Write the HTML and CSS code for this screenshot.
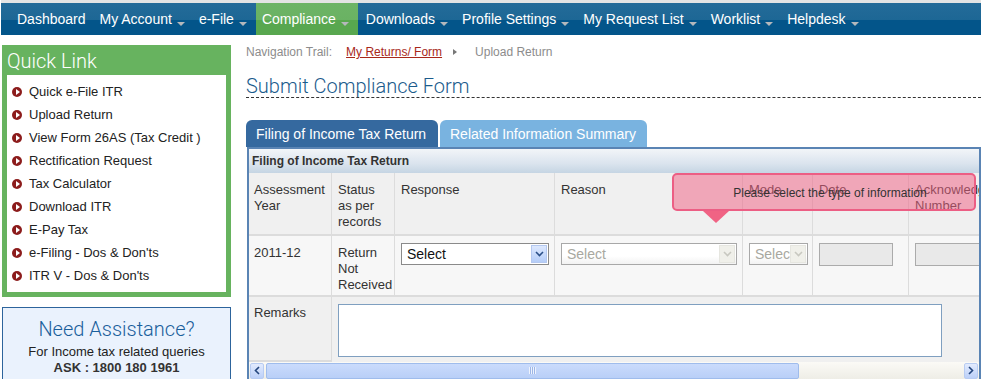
FILE: index.html
```html
<!DOCTYPE html>
<html lang="en">
<head>
    <meta charset="UTF-8">
    <meta name="viewport" content="width=device-width, initial-scale=1.0">
    <title>Submit Compliance Form</title>
    <link rel="stylesheet" href="styles.css">
</head>
<body>
    <div class="topnav">
        <a class="nav-item">Dashboard</a>
        <a class="nav-item">My Account<span class="caret"></span></a>
        <a class="nav-item">e-File<span class="caret"></span></a>
        <a class="nav-item active">Compliance<span class="caret"></span></a>
        <a class="nav-item">Downloads<span class="caret"></span></a>
        <a class="nav-item">Profile Settings<span class="caret"></span></a>
        <a class="nav-item">My Request List<span class="caret"></span></a>
        <a class="nav-item">Worklist<span class="caret"></span></a>
        <a class="nav-item">Helpdesk<span class="caret"></span></a>
    </div>

    <div class="page">
        <div class="sidebar">
            <div class="quick-link">
                <div class="ql-title">Quick Link</div>
                <ul class="ql-list">
                    <li><span class="bullet"></span>Quick e-File ITR</li>
                    <li><span class="bullet"></span>Upload Return</li>
                    <li><span class="bullet"></span>View Form 26AS (Tax Credit )</li>
                    <li><span class="bullet"></span>Rectification Request</li>
                    <li><span class="bullet"></span>Tax Calculator</li>
                    <li><span class="bullet"></span>Download ITR</li>
                    <li><span class="bullet"></span>E-Pay Tax</li>
                    <li><span class="bullet"></span>e-Filing - Dos &amp; Don'ts</li>
                    <li><span class="bullet"></span>ITR V - Dos &amp; Don'ts</li>
                </ul>
            </div>
            <div class="assist">
                <div class="assist-title">Need Assistance?</div>
                <div class="assist-text">For Income tax related queries</div>
                <div class="assist-phone">ASK : 1800 180 1961</div>
            </div>
        </div>

        <div class="main">
            <div class="trail">
                <span class="trail-label">Navigation Trail:</span>
                <a class="trail-link">My Returns/ Form</a>
                <span class="trail-arrow"></span>
                <span>Upload Return</span>
            </div>
            <h1 class="page-title">Submit Compliance Form</h1>

            <div class="tabs">
                <div class="tab active">Filing of Income Tax Return</div>
                <div class="tab">Related Information Summary</div>
            </div>

            <div class="panel">
                <div class="panel-head">Filing of Income Tax Return</div>
                <div class="scroll-area">
                    <div class="grid">
                        <div class="cell head">Assessment Year</div>
                        <div class="cell head">Status as per records</div>
                        <div class="cell head">Response</div>
                        <div class="cell head">Reason</div>
                        <div class="cell head">Mode</div>
                        <div class="cell head">Date</div>
                        <div class="cell head">Acknowledgement Number</div>

                        <div class="cell">2011-12</div>
                        <div class="cell">Return Not Received</div>
                        <div class="cell">
                            <div class="sel sel-response"><span>Select</span><span class="sel-btn"><svg width="9" height="6" viewBox="0 0 9 6"><path d="M1 1 L4.5 4.5 L8 1" fill="none" stroke="#2a4f88" stroke-width="1.6"/></svg></span></div>
                        </div>
                        <div class="cell">
                            <div class="sel sel-reason disabled"><span>Select</span><span class="sel-btn"><svg width="9" height="6" viewBox="0 0 9 6"><path d="M1 1 L4.5 4.5 L8 1" fill="none" stroke="#c8c8c0" stroke-width="1.6"/></svg></span></div>
                        </div>
                        <div class="cell">
                            <div class="sel sel-mode disabled"><span>Select</span><span class="sel-btn"><svg width="9" height="6" viewBox="0 0 9 6"><path d="M1 1 L4.5 4.5 L8 1" fill="none" stroke="#c8c8c0" stroke-width="1.6"/></svg></span></div>
                        </div>
                        <div class="cell"><div class="txt-box date-box"></div></div>
                        <div class="cell"><div class="txt-box ack-box"></div></div>

                        <div class="cell label">Remarks</div>
                        <div class="cell remarks"><div class="remarks-box"></div></div>
                    </div>
                </div>
                <div class="hscroll">
                    <span class="sb-btn"><svg width="6" height="9" viewBox="0 0 6 9"><path d="M5 1 L1.5 4.5 L5 8" fill="none" stroke="#24467e" stroke-width="1.6"/></svg></span>
                    <span class="sb-thumb"><span class="grip"></span></span>
                    <span class="sb-track"></span>
                    <span class="sb-btn"><svg width="6" height="9" viewBox="0 0 6 9"><path d="M1 1 L4.5 4.5 L1 8" fill="none" stroke="#24467e" stroke-width="1.6"/></svg></span>
                </div>

                <div class="tooltip">Please select the type of information</div>
            </div>
        </div>
    </div>
</body>
</html>
```

FILE: styles.css
```css
body {
    margin: 0;
    font-family: "Liberation Sans", Arial, sans-serif;
    background: #fff;
    color: #222;
    width: 990px;
    overflow: hidden;
}
.topnav {
    display: flex;
    margin: 0 9px 0 1px;
    padding-left: 9px;
    height: 32px;
    border-top: 3px solid #e4e4e4;
    background: linear-gradient(#246b99 0, #1d6795 52%, #03558a 52%, #03558a 100%);
}
.nav-item {
    display: flex;
    align-items: center;
    padding: 0 7px;
    color: #fff;
    font-size: 14px;
    white-space: nowrap;
}
.nav-item.active {
    background: linear-gradient(#6db466 0, #6ab263 52%, #58a74f 52%, #58a74f 100%);
    padding: 0 9px 0 6px;
    margin: 0 1px 0 2px;
}
.caret {
    display: inline-block;
    margin: 10px 0 0 5px;
    border-left: 4px solid transparent;
    border-right: 4px solid transparent;
    border-top: 4px solid #b4b8bc;
}
.page {
    display: flex;
}
.sidebar {
    width: 229px;
    margin: 10px 0 0 2px;
}
.quick-link {
    background: #67b35f;
    padding: 0 5px 5px;
}
.ql-title {
    height: 30px;
    line-height: 32px;
    color: #fff;
    font-family: Roboto, "Liberation Sans", sans-serif;
    font-weight: 300;
    font-size: 20px;
}
.ql-list {
    list-style: none;
    margin: 0;
    padding: 5px 0;
    background: #fff;
}
.ql-list li {
    height: 23px;
    line-height: 23px;
    font-size: 13px;
    color: #222;
    display: flex;
    align-items: center;
}
.bullet {
    position: relative;
    width: 10px;
    height: 10px;
    margin: 0 7px 0 5px;
    border-radius: 50%;
    background: #8c1c1c;
}
.bullet::after {
    content: "";
    position: absolute;
    left: 4px;
    top: 2px;
    border-top: 3px solid transparent;
    border-bottom: 3px solid transparent;
    border-left: 4px solid #fff;
}
.assist {
    margin-top: 10px;
    height: 80px;
    border: 1px solid #2d649c;
    background: #eaf2fd;
    text-align: center;
}
.assist-title {
    margin-top: 9px;
    font-family: Roboto, "Liberation Sans", sans-serif;
    font-weight: 300;
    font-size: 20px;
    color: #1a5f9c;
    line-height: 24px;
}
.assist-text {
    margin-top: 3px;
    font-size: 13px;
    line-height: 16px;
}
.assist-phone {
    font-size: 13px;
    font-weight: bold;
    color: #333;
    line-height: 16px;
}
.main {
    width: 735px;
    margin-left: 15px;
}
.trail {
    margin-top: 9px;
    height: 16px;
    line-height: 16px;
    font-size: 12px;
    color: #8c8c8c;
    display: flex;
    align-items: center;
}
.trail-link {
    margin-left: 14px;
    color: #a8281a;
    text-decoration: underline;
}
.trail-arrow {
    margin: 0 18px 0 11px;
    border-top: 3px solid transparent;
    border-bottom: 3px solid transparent;
    border-left: 4px solid #777;
}
.page-title {
    margin: 14px 0 0;
    height: 23px;
    line-height: 24px;
    font-family: Roboto, "Liberation Sans", sans-serif;
    font-weight: 300;
    font-size: 20px;
    color: #1b5b8c;
    border-bottom: 1px dashed #333;
}
.tabs {
    display: flex;
    gap: 2px;
    margin-top: 22px;
}
.tab {
    height: 27px;
    line-height: 28px;
    padding: 0 10px;
    border-radius: 6px 6px 0 0;
    background: #79b3e0;
    color: #fff;
    font-size: 14px;
    width: 187px;
}
.tab.active {
    background: #35699f;
    width: 172px;
}
.panel {
    position: relative;
    margin-left: 1px;
    border: 2px solid #5a84b4;
    border-bottom: none;
    height: 230px;
    background: #f0f0f0;
    overflow: hidden;
}
.panel-head {
    height: 24px;
    line-height: 24px;
    padding-left: 3px;
    font-size: 12px;
    font-weight: bold;
    color: #333;
    background: linear-gradient(#f2f5f8, #dbe4ee 60%, #c5d5e3);
}
.scroll-area {
    overflow: hidden;
}
.grid {
    display: grid;
    grid-template-columns: 84px 63px 160px 188px 70px 96px 130px;
    grid-template-rows: 63px 61px 65px;
    width: 791px;
    margin-left: -1px;
}
.cell {
    box-sizing: border-box;
    padding: 9px 6px 0;
    font-size: 13px;
    line-height: 16px;
    color: #333;
    border-right: 1px solid #dcdcdc;
    border-bottom: 2px solid #dcdcdc;
    background: #f7f7f7;
}
.cell.head {
    background: #f0f0f0;
}
.cell.label {
    background: #f0f0f0;
    padding-top: 8px;
}
.cell.remarks {
    grid-column: 2 / 8;
    background: #f0f0f0;
    padding-top: 7px;
    border-bottom: none;
}
.sel {
    display: flex;
    align-items: center;
    justify-content: space-between;
    box-sizing: border-box;
    height: 22px;
    margin-top: -2px;
    border: 1px solid #8a8a8a;
    background: #fff;
    font-size: 14px;
    color: #111;
    padding-left: 5px;
}
.sel-response {
    width: 148px;
}
.sel-reason {
    width: 176px;
}
.sel-mode {
    width: 59px;
    overflow: hidden;
    white-space: nowrap;
}
.sel.disabled {
    border-color: #a8a8a8;
    color: #a8a8a0;
    background: linear-gradient(#fff 60%, #f2f2f2);
}
.sel-btn {
    flex: none;
    display: flex;
    align-items: center;
    justify-content: center;
    width: 16px;
    height: 18px;
    margin-right: 1px;
    background: linear-gradient(#dde8fe, #b5cdf8);
    border: 1px solid #b4c8f0;
    box-sizing: border-box;
}
.disabled .sel-btn {
    background: #f0f0ea;
    border-color: #e6e6e0;
}
.sel-mode span:first-child {
    overflow: hidden;
}
.txt-box {
    box-sizing: border-box;
    height: 23px;
    margin-top: -2px;
    border: 1px solid #ababab;
    background: #e9e9e9;
}
.date-box {
    width: 74px;
}
.ack-box {
    width: 110px;
}
.remarks-box {
    box-sizing: border-box;
    width: 604px;
    height: 53px;
    border: 1px solid #7f9fc0;
    background: #fff;
}
.hscroll {
    display: flex;
    align-items: center;
    height: 17px;
    background: linear-gradient(#fbfaf6, #eeede6);
    padding: 0 1px;
}
.sb-btn {
    display: flex;
    align-items: center;
    justify-content: center;
    box-sizing: border-box;
    width: 14px;
    height: 16px;
    background: linear-gradient(#e2ebfe, #bcd0f8);
    border: 1px solid #b8ccf2;
    border-radius: 2px;
}
.sb-thumb {
    display: flex;
    align-items: center;
    justify-content: center;
    box-sizing: border-box;
    width: 533px;
    height: 16px;
    margin-left: 2px;
    background: linear-gradient(#cadbfc, #b9cff7);
    border: 1px solid #9fbcec;
    border-radius: 2px;
}
.grip {
    width: 7px;
    height: 7px;
    background: repeating-linear-gradient(90deg, #eef3fd 0 1px, #9db6e6 1px 2px);
}
.sb-track {
    flex: 1;
}
.tooltip {
    position: absolute;
    left: 423px;
    top: 24px;
    box-sizing: border-box;
    width: 304px;
    height: 38px;
    line-height: 36px;
    border: 2px solid #ec5e84;
    border-radius: 5px;
    background: rgba(240, 98, 133, 0.52);
    color: #333;
    font-size: 12px;
    text-align: center;
    padding-left: 12px;
}
.tooltip::after {
    content: "";
    position: absolute;
    left: 29px;
    top: 36px;
    border-left: 13px solid transparent;
    border-right: 13px solid transparent;
    border-top: 12px solid #f06384;
}
```
